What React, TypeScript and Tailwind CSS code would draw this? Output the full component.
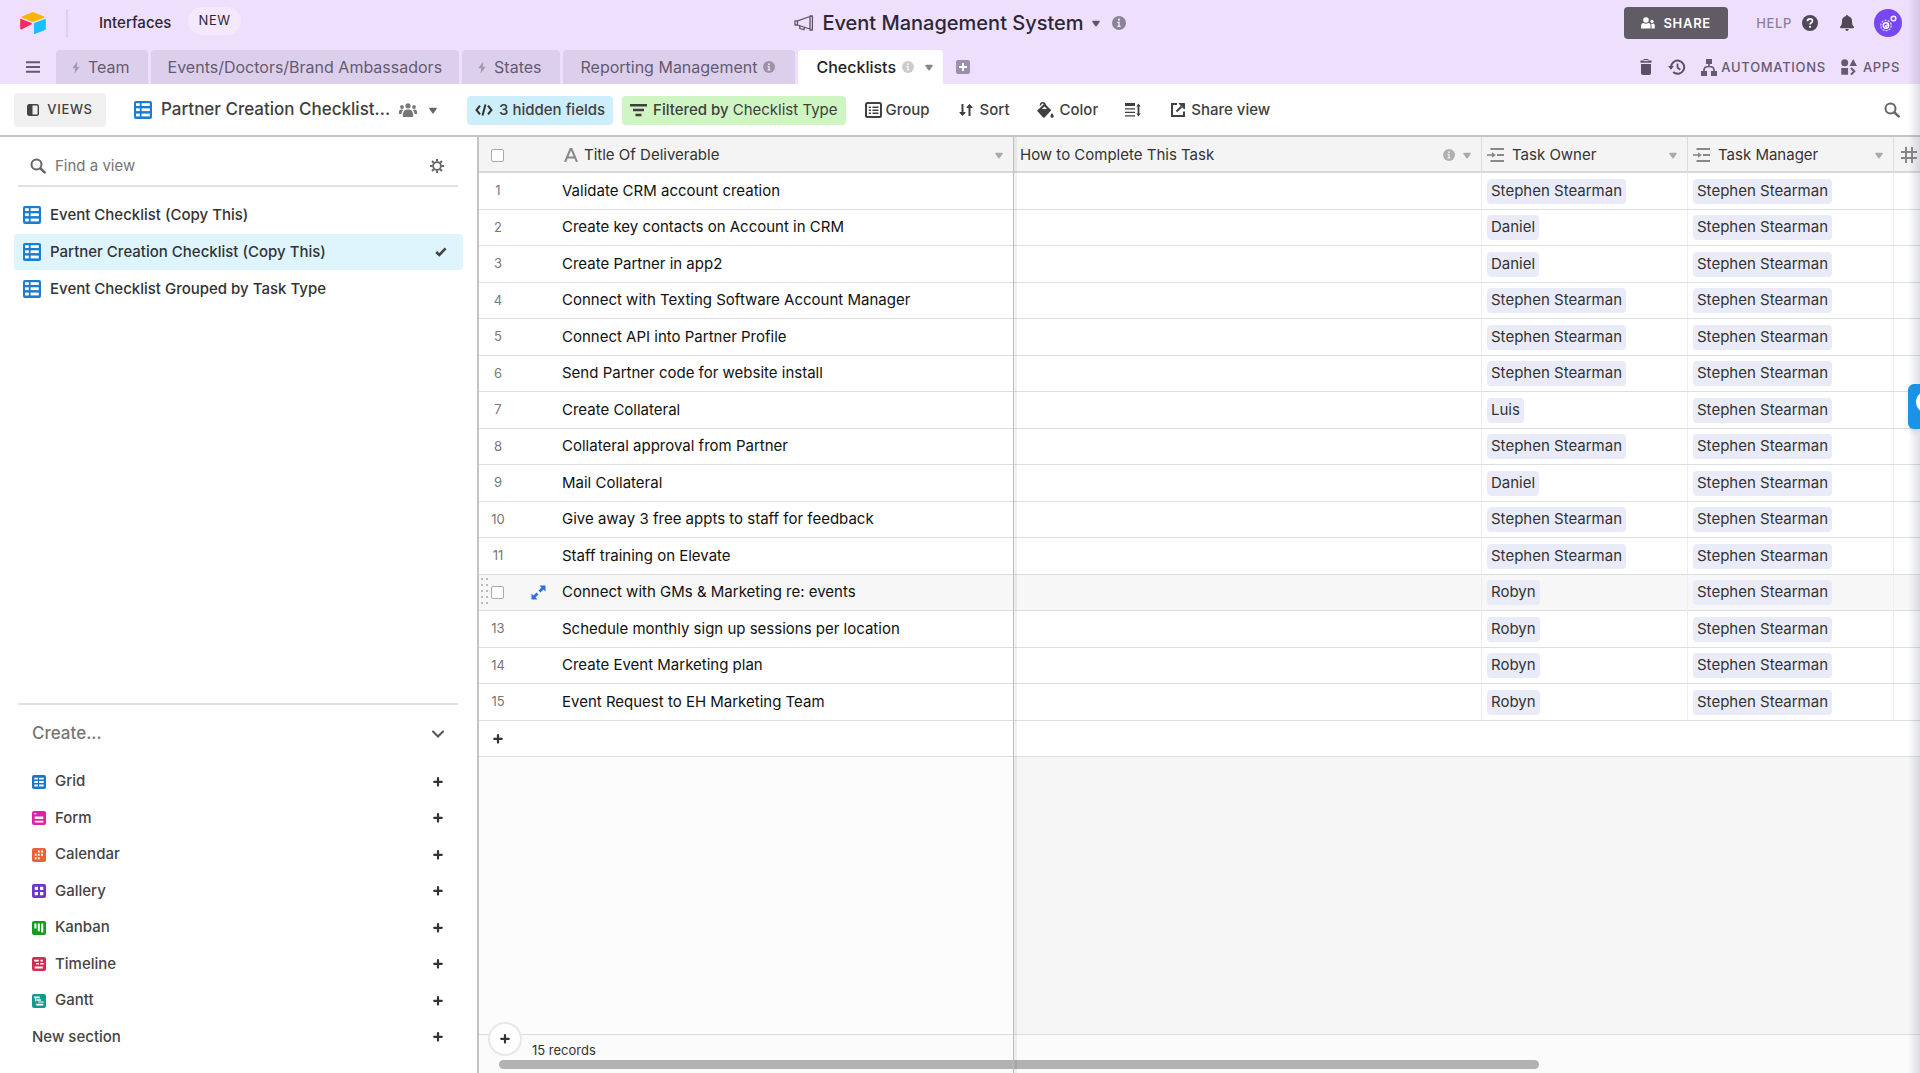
import type { ReactNode } from "react";
import clsx from "clsx";

type Task = { title: string; owner: string; manager: string };

const TASKS: Task[] = [
  { title: "Validate CRM account creation", owner: "Stephen Stearman", manager: "Stephen Stearman" },
  { title: "Create key contacts on Account in CRM", owner: "Daniel", manager: "Stephen Stearman" },
  { title: "Create Partner in app2", owner: "Daniel", manager: "Stephen Stearman" },
  { title: "Connect with Texting Software Account Manager", owner: "Stephen Stearman", manager: "Stephen Stearman" },
  { title: "Connect API into Partner Profile", owner: "Stephen Stearman", manager: "Stephen Stearman" },
  { title: "Send Partner code for website install", owner: "Stephen Stearman", manager: "Stephen Stearman" },
  { title: "Create Collateral", owner: "Luis", manager: "Stephen Stearman" },
  { title: "Collateral approval from Partner", owner: "Stephen Stearman", manager: "Stephen Stearman" },
  { title: "Mail Collateral", owner: "Daniel", manager: "Stephen Stearman" },
  { title: "Give away 3 free appts to staff for feedback", owner: "Stephen Stearman", manager: "Stephen Stearman" },
  { title: "Staff training on Elevate", owner: "Stephen Stearman", manager: "Stephen Stearman" },
  { title: "Connect with GMs & Marketing re: events", owner: "Robyn", manager: "Stephen Stearman" },
  { title: "Schedule monthly sign up sessions per location", owner: "Robyn", manager: "Stephen Stearman" },
  { title: "Create Event Marketing plan", owner: "Robyn", manager: "Stephen Stearman" },
  { title: "Event Request to EH Marketing Team", owner: "Robyn", manager: "Stephen Stearman" },
];

const HOVERED_ROW = 11;

const VIEWS = [
  "Event Checklist (Copy This)",
  "Partner Creation Checklist (Copy This)",
  "Event Checklist Grouped by Task Type",
];

/* ---------- icons ---------- */

function Caret({ className = "text-[#666]" }: { className?: string }) {
  return (
    <svg viewBox="0 0 8 7" className={clsx("h-[7px] w-2 shrink-0", className)} fill="currentColor">
      <path d="M1 .8h6c.6 0 .9.6.6 1.100L4.600 6.200c-.3.4-.9.400-1.200 0L.4 1.900C.1 1.400.4.8 1 .8z" />
    </svg>
  );
}

function Info({ className }: { className?: string }) {
  return (
    <svg viewBox="0 0 14 14" className={clsx("shrink-0", className)}>
      <circle cx="7" cy="7" r="7" fill="currentColor" />
      <circle cx="7" cy="3.700" r="1.100" fill="#fff" fillOpacity=".85" />
      <path d="M5.300 5.800h2.400v4h1v1.200H5.300V9.800h1V7h-1z" fill="#fff" fillOpacity=".85" />
    </svg>
  );
}

function Plus({ className = "size-3" }: { className?: string }) {
  return (
    <svg viewBox="0 0 12 12" className={clsx("shrink-0 text-[#333]", className)} stroke="currentColor" strokeWidth="2.200" strokeLinecap="round">
      <path d="M6 2v7.600M2.200 5.800h7.600" />
    </svg>
  );
}

function Bolt() {
  return (
    <svg viewBox="0 0 8 14" className="h-[13px] w-2 shrink-0 text-[#a398ae]" fill="currentColor">
      <path d="M5.600.5 0 7.800h3.200L2.400 13.500 8 6.200H4.800z" />
    </svg>
  );
}

function Search() {
  return (
    <svg viewBox="0 0 16 16" className="size-4 shrink-0 text-[#666]" fill="none" stroke="currentColor">
      <circle cx="6.500" cy="6.500" r="5" strokeWidth="2" />
      <path d="m10.400 10.400 4.200 4" strokeWidth="2.600" strokeLinecap="round" />
    </svg>
  );
}

function GridIcon() {
  return (
    <svg viewBox="0 0 18 18" className="size-[18px] shrink-0">
      <rect width="18" height="18" rx="2" fill="#1b7dd0" />
      <g fill="#fff">
        <rect x="2" y="2.200" width="3.800" height="2.800" />
        <rect x="7.600" y="2.200" width="8.200" height="2.800" />
        <rect x="2" y="7.300" width="3.800" height="2.800" />
        <rect x="7.600" y="7.300" width="8.200" height="2.800" />
        <rect x="2" y="12.600" width="3.800" height="2.800" />
        <rect x="7.600" y="12.600" width="8.200" height="2.800" />
      </g>
    </svg>
  );
}

function ViewTypeIcon({ color, children }: { color: string; children: ReactNode }) {
  return (
    <svg viewBox="0 0 14 14" className="size-[14px] shrink-0">
      <rect width="14" height="14" rx="2" fill={color} />
      <g fill="#fff">{children}</g>
    </svg>
  );
}

const VIEW_TYPES: { name: string; color: string; shape: ReactNode }[] = [
  {
    name: "Grid",
    color: "#1b76c8",
    shape: <path d="M2.300 2.700h3.600v1.900H2.300zM7 2.700h4.700v1.900H7zM2.300 6.100h3.600v1.900H2.300zM7 6.100h4.700v1.900H7zM2.300 9.500h3.600v1.900H2.300zM7 9.500h4.700v1.900H7z" />,
  },
  {
    name: "Form",
    color: "#dd22aa",
    shape: <path d="M2 2.200h2.500v1H2zM2.700 5.500h8.600v2.600H2.700zM2.700 9.700h8.600v1.800H2.700z" />,
  },
  {
    name: "Calendar",
    color: "#e8623a",
    shape: <path d="M5.900 2.500h1.800v2H5.900zM9 2.500h2v2H9zM2.800 5.800h1.800v2H2.800zM5.900 5.800h1.800v2H5.900zM9 5.800h2v2H9zM2.800 9.200h1.800v2H2.800zM5.900 9.200h1.800v2H5.900z" />,
  },
  {
    name: "Gallery",
    color: "#6b36c9",
    shape: <path d="M2.700 2.700h3.300v3.300H2.700zM8 2.700h3.300v3.300H8zM2.700 8h3.300v3.300H2.700zM8 8h3.300v3.300H8z" />,
  },
  {
    name: "Kanban",
    color: "#149c22",
    shape: <path d="M2.400 2.500h2v5h-2zM5.800 2.500h2v7.800h-2zM9.100 2.500h2.200v9H9.100z" />,
  },
  {
    name: "Timeline",
    color: "#d02d50",
    shape: <path d="M2.200 2.700h4.600v1.700H2.200zM8.500 2.700h2.300v1.700H8.500zM4.200 5.900h2.800v1.700H4.200zM8.200 5.900h3.600v1.700H8.200zM2.700 9.500h8.100v1.900H2.700z" />,
  },
  {
    name: "Gantt",
    color: "#14998f",
    shape: <path d="M2.200 2.500h5.600v1.700H2.200zM4.700 5.300h4.200v1.400H4.700zM6.200 7.400h5.500v1.200H6.200zM4.200 9.700h7.100v1.700H4.200zM3.200 4h1v3.500h-1z" />,
  },
];

function LinkFieldIcon() {
  return (
    <svg viewBox="0 0 18 16" className="h-4 w-[18px] shrink-0 text-[#888]" fill="none" stroke="currentColor" strokeWidth="2">
      <path d="M3.500 2H17M10 8h7M3.500 14H17" />
      <path d="M0 8h6" strokeWidth="1.600" />
      <path d="m5 5.200 3.800 2.800L5 10.800z" fill="currentColor" stroke="none" />
    </svg>
  );
}

/* ---------- top bars ---------- */

function TopBar() {
  return (
    <header className="grid h-[50px] grid-cols-[1fr_auto_1fr] pr-[18px] pl-5 text-[#2d2735]">
      <div className="flex h-[46px] items-center">
        <svg viewBox="0 0 26 22" className="h-[22px] w-[26px]">
          <path d="M11.700.5 2 4.500c-.6.200-.6 1 0 1.200l9.700 3.900c.9.300 1.800.3 2.600 0L24 5.700c.6-.2.600-1 0-1.200L14.300.5c-.8-.3-1.700-.3-2.600 0z" fill="#fcb400" />
          <path d="M14 11.800v9.500c0 .4.500.7.900.6l10.500-4.200c.3-.1.400-.3.400-.6V7.500c0-.4-.4-.7-.8-.6l-10.600 4.200c-.2.100-.4.400-.4.700z" fill="#18bfff" />
          <path d="m11.600 12.300-3.200 1.600-6.900 3.500c-.6.300-1.300-.1-1.300-.7V7.600C.2 7.100.8 6.600 1.400 6.900l10.100 4.200c.5.200.5.900.1 1.200z" fill="#f82b60" />
        </svg>
        <span className="ml-5 h-7 w-0.5 bg-[#dfd0ee]" />
        <button type="button" className="ml-[31px] text-[15px] font-medium">Interfaces</button>
        <span className="mb-1 ml-[17px] rounded-full bg-[#f3e8fe] px-2.5 py-1 text-[13px] tracking-wider">NEW</span>
      </div>

      <div className="flex h-[46px] items-center">
        <svg viewBox="0 0 20 16" className="h-4 w-5" fill="none" stroke="#5d5367" strokeWidth="1.300" strokeLinejoin="round">
          <path d="M3.500 5.800 16 1.500v12.500L3.500 10zM16 1h2.400v14H16zM1 5.800h2.500V10H1z" />
          <path d="M5.800 10.800v2.700l4.200 1.200.6-2.200" />
        </svg>
        <h1 className="ml-2 text-xl font-medium">Event Management System</h1>
        <span className="ml-2"><Caret className="text-[#5d5367]" /></span>
        <Info className="mr-0.5 ml-3 size-[14px] text-[#8d8398]" />
      </div>

      <div className="flex h-[46px] items-center justify-end text-sm">
        <button type="button" className="flex h-8 w-[104px] items-center justify-center gap-2 rounded bg-[#605b64] font-semibold tracking-wider text-white">
          <svg viewBox="0 0 14 12" className="h-3 w-[14px]" fill="#fff">
            <circle cx="5" cy="3" r="2.800" />
            <path d="M0 11.500V9c0-2 1.200-3 2.700-3 1.300.9 3.300.9 4.600 0C8.800 6 9.600 7 9.600 9v2.500z" />
            <circle cx="11" cy="4.400" r="1.600" />
            <path d="M10.500 11.500V9c0-1-.2-1.800-.6-2.400.8.500 1.600.4 2.300 0 1.200.1 1.600.9 1.600 2v2.900z" />
          </svg>
          <span className="text-[13px]">SHARE</span>
        </button>
        <a href="#help" className="ml-7 flex items-center gap-[10px] text-[13px] font-medium tracking-wider text-[#8a7f96]">
          HELP
          <svg viewBox="0 0 16 16" className="size-4">
            <circle cx="8" cy="8" r="8" fill="#504858" />
            <path d="M5.500 6.200c0-1.500 1.100-2.400 2.500-2.400s2.500.9 2.500 2.200C10.500 7.700 8 7.700 8 9.400" fill="none" stroke="#fff" strokeWidth="1.700" />
            <circle cx="8" cy="11.800" r="1.100" fill="#fff" />
          </svg>
        </a>
        <button type="button" aria-label="Notifications" className="ml-[22px]">
          <svg viewBox="0 0 14 16" className="h-4 w-[14px]" fill="#504858">
            <path d="M7 0c.7 0 1 .5 1 1 2.600.5 4 2.500 4 5 0 3.500.7 4.600 1.700 5.600.6.6.2 1.600-.7 1.600H1c-.9 0-1.300-1-.7-1.600C1.300 10.600 2 9.500 2 6c0-2.500 1.400-4.500 4-5 0-.5.3-1 1-1zM5.400 14h3.200c0 2.600-3.200 2.600-3.200 0z" />
          </svg>
        </button>
        <button type="button" aria-label="Account" className="ml-5 flex size-7 items-center justify-center rounded-full bg-[#7747f2]">
          <svg viewBox="0 0 28 28" className="size-7" fill="none" stroke="#fff">
            <circle cx="12" cy="16.500" r="2.700" strokeWidth="1.400" />
            <circle cx="12" cy="16.500" r="5.200" strokeWidth="1.300" strokeDasharray="2 1.200" strokeOpacity=".75" />
            <path d="m11 16.500 1 1 1.800-2.200" strokeWidth="1.200" />
            <circle cx="19.500" cy="9.500" r="2.300" strokeWidth="1.600" strokeOpacity=".9" />
          </svg>
        </button>
      </div>
    </header>
  );
}

function Tab({ children }: { children: ReactNode }) {
  return (
    <button type="button" className="flex h-[34px] items-center rounded-t-sm bg-[#dccfec] text-base text-[#655b70]">
      {children}
    </button>
  );
}

function TabBar() {
  return (
    <nav className="flex h-[34px] items-center pr-5 text-[#655b70]">
      <button type="button" aria-label="All tables" className="flex w-14 justify-center pl-2.5">
        <svg viewBox="0 0 14 12" className="h-3 w-[14px]" stroke="#655b70" strokeWidth="2">
          <path d="M0 1.200h14M0 6h14M0 10.800h14" />
        </svg>
      </button>
      <div className="flex gap-[3px]">
        <Tab><span className="flex items-center gap-2 pr-[18px] pl-4"><Bolt />Team</span></Tab>
        <Tab><span className="px-[17px]">Events/Doctors/Brand Ambassadors</span></Tab>
        <Tab><span className="flex items-center gap-2 pr-[18px] pl-4"><Bolt />States</span></Tab>
        <Tab>
          <span className="flex items-center gap-1.5 pr-5 pl-[18px]">
            Reporting Management
            <Info className="size-3 text-[#9d92a9]" />
          </span>
        </Tab>
        <button type="button" className="flex h-[34px] items-center rounded-t-sm bg-white pr-[10px] pl-[18px] text-base font-medium text-[#222]">
          Checklists
          <Info className="mr-[11px] ml-1.5 size-3 text-[#ccc]" />
          <Caret className="text-[#888]" />
        </button>
      </div>
      <button type="button" aria-label="Add table" className="ml-[13px]">
        <svg viewBox="0 0 14 14" className="size-[14px]">
          <rect width="14" height="14" rx="2" fill="#9c8fac" />
          <path d="M7 3v8M3 7h8" stroke="#fff" strokeWidth="1.800" />
        </svg>
      </button>

      <div className="ml-auto flex items-center text-sm font-medium">
        <button type="button" aria-label="Trash">
          <svg viewBox="0 0 12 16" className="h-4 w-3" fill="#5a5064">
            <path d="M4 0h4l1 1.500h2.500v2.200H.5V1.500H3zM1 5h10v9c0 1.200-.8 2-2 2H3c-1.200 0-2-.8-2-2z" />
            <path d="M3.500 1.700h5" stroke="#eedffc" />
          </svg>
        </button>
        <button type="button" aria-label="History" className="ml-4">
          <svg viewBox="0 0 18 16" className="h-4 w-[18px]" fill="none" stroke="#5a5064" strokeWidth="2">
            <path d="M3 8.500a6.600 6.600 0 1 1 2.200 4.600" />
            <path d="M9.500 4.500V8.500l2.700 2.200" strokeWidth="1.800" />
            <path d="M0 7h6L3 10.700z" fill="#5a5064" stroke="none" />
          </svg>
        </button>
        <button type="button" className="ml-[15px] flex items-center gap-1 tracking-wider">
          <svg viewBox="0 0 16 17" className="h-[17px] w-4" fill="#655b70">
            <path d="M5 0h6v5H5zM0 12h6v5H0zM10 12h6v5h-6z" />
            <path d="M8 5v3M3 12V11c0-2.500 2-3.500 5-3.500s5 1 5 3.500v1" fill="none" stroke="#655b70" strokeWidth="1.700" />
          </svg>
          <span className="text-[13px]">AUTOMATIONS</span>
        </button>
        <button type="button" className="ml-[15px] flex items-center gap-1.5 tracking-wider">
          <svg viewBox="0 0 16 16" className="size-4" fill="#655b70">
            <circle cx="3.700" cy="3.700" r="3.500" />
            <path d="M12.200 0 16 7H8.500zM.3 9h6.800v6.800H.3z" />
            <path d="m10 9 3.300 3.300L10 15.600" fill="none" stroke="#655b70" strokeWidth="2" />
          </svg>
          <span className="text-[13px]">APPS</span>
        </button>
      </div>
    </nav>
  );
}

function Toolbar() {
  return (
    <div className="flex h-[53px] items-center border-b-2 border-[#c4c4c4] bg-white pt-px pr-5 pl-[14px] text-[15px] font-medium text-[#404040]">
      <button type="button" className="flex h-[34px] w-[92px] items-center justify-center gap-2 rounded-sm bg-[#f0f0f0]">
        <svg viewBox="0 0 12 12" className="size-3">
          <rect x=".7" y=".7" width="10.600" height="10.600" rx="1.500" fill="none" stroke="#444" strokeWidth="1.400" />
          <path d="M1 1h4.500v10H1z" fill="#444" />
        </svg>
        <span className="text-[13px] tracking-wider">VIEWS</span>
      </button>
      <button type="button" className="ml-7 flex items-center">
        <GridIcon />
        <span className="ml-[9px] text-[17px]">Partner Creation Checklist...</span>
        <svg viewBox="0 0 18 14" className="ml-[9px] h-[14px] w-[18px]" fill="#777">
          <circle cx="9" cy="2.800" r="2.600" />
          <circle cx="3" cy="4" r="1.900" />
          <circle cx="15" cy="4" r="1.900" />
          <path d="M4.800 14c-.8 0-1-.6-1-1.500C3.800 8.500 5.500 6.500 9 6.500s5.200 2 5.200 6c0 .9-.2 1.500-1 1.500zM0 11V9c0-1.700 1-2.500 2.500-2.500.8 0 1.300.2 1.700.5C3 8.200 2.600 9.500 2.500 11zM18 11V9c0-1.700-1-2.500-2.500-2.500-.8 0-1.300.2-1.700.5 1.200 1.200 1.600 2.500 1.700 4z" />
        </svg>
        <span className="ml-3"><Caret /></span>
      </button>
      <button type="button" className="ml-[30px] flex h-[29px] items-center gap-1.5 rounded-sm bg-[#cdeefb] px-2">
        <svg viewBox="0 0 18 12" className="h-3 w-[18px]" fill="none" stroke="#333" strokeWidth="2">
          <path d="M5 1.700 1.500 6 5 10.300M13 1.700 16.500 6 13 10.300M10.500.5l-3 11" />
        </svg>
        3 hidden fields
      </button>
      <button type="button" className="ml-[9px] flex h-[29px] items-center gap-1.5 rounded-sm bg-[#cff5c2] px-2">
        <svg viewBox="0 0 17 13" className="h-[13px] w-[17px]" stroke="#404040" strokeWidth="2.400">
          <path d="M0 1.300h17M3 6h11M5.500 11h6" />
        </svg>
        <span>Filtered by <span className="font-normal">Checklist Type</span></span>
      </button>
      <button type="button" className="ml-[19px] flex items-center gap-1">
        <svg viewBox="0 0 17 16" className="h-4 w-[17px]" fill="none" stroke="#404040" strokeWidth="2">
          <rect x="1" y="1" width="15" height="14" rx="1.500" />
          <path d="M3.800 5.300h2.200M3.800 8.300h2.200M3.800 11.300h2.200M7.500 5.300h6M7.500 8.300h6M7.500 11.300h6" strokeWidth="1.600" />
        </svg>
        Group
      </button>
      <button type="button" className="ml-7 flex items-center gap-1.5">
        <svg viewBox="0 0 16 14" className="h-[14px] w-4" fill="none" stroke="#404040" strokeWidth="2">
          <path d="M4.500 1v10M11.500 13V3" />
          <path d="M1.800 9.500 4.500 12.500 7.200 9.500zM8.800 4.500 11.500 1.500 14.200 4.500z" fill="#404040" strokeWidth="1" />
        </svg>
        Sort
      </button>
      <button type="button" className="ml-[27px] flex items-center gap-1.5">
        <svg viewBox="0 0 17 16" className="h-4 w-[17px]" fill="#404040">
          <path d="M0 8.700 7.500 1.500l6.800 6.700-6.500 7c-.6.600-1.300.6-1.900 0zM15 11c1.200 1.600 1.700 2.400 1.700 3.200 0 1-.8 1.500-1.600 1.500s-1.600-.5-1.600-1.500c0-.8.4-1.600 1.500-3.200z" />
          <path d="M3.300 3.500C3.600.5 6-.3 8 2l1 4.500" fill="none" stroke="#404040" strokeWidth="1.500" />
          <path d="M4.800 7 7.500 4.500l2.500 2.500z" fill="#fff" />
        </svg>
        Color
      </button>
      <button type="button" aria-label="Row height" className="ml-[27px]">
        <svg viewBox="0 0 16 14" className="h-[14px] w-4" fill="none" stroke="#404040">
          <path d="M0 1.500h10" strokeWidth="3" />
          <path d="M0 5.800h10M0 9.300h10M0 12.800h10" strokeWidth="1.300" />
          <path d="M13.500 2.500v9" strokeWidth="1.800" />
          <path d="m11.300 3.500 2.200-3 2.200 3zM11.300 10.500l2.200 3 2.200-3z" fill="#404040" stroke="none" />
        </svg>
      </button>
      <button type="button" className="ml-[30px] flex items-center gap-1.5">
        <svg viewBox="0 0 14 14" className="size-[14px]" fill="none" stroke="#404040" strokeWidth="2">
          <path d="M6 1H1v12h12V8.500" />
          <path d="m5.500 8.500 5-5" />
          <path d="M8 .5h5.500V6z" fill="#404040" strokeWidth="1" />
        </svg>
        Share view
      </button>
      <button type="button" aria-label="Search" className="ml-auto"><Search /></button>
    </div>
  );
}

/* ---------- sidebar ---------- */

function Sidebar() {
  return (
    <aside className="flex w-[479px] shrink-0 flex-col justify-between border-r-2 border-[#c4c4c4] bg-white text-[15px] font-medium">
      <div>
        <div className="mr-[19px] ml-[18px] flex h-[50px] items-center border-b-2 border-[#e0e0e0] pt-2.5 pr-[14px] pl-3">
          <Search />
          <input
            type="text"
            aria-label="Find a view"
            placeholder="Find a view"
            className="ml-[9px] flex-1 font-normal outline-none placeholder:text-[#757575]"
          />
          <button type="button" aria-label="View settings">
            <svg viewBox="0 0 14 14" className="size-[14px]" fill="none" stroke="#666">
              <circle cx="7" cy="7" r="3.900" strokeWidth="1.800" />
              <path d="M7 0v2.500M7 11.500V14M0 7h2.500M11.500 7H14M2 2l1.800 1.800M10.200 10.200 12 12M2 12l1.800-1.800M10.200 3.800 12 2" strokeWidth="2" />
            </svg>
          </button>
        </div>
        <ul className="mt-2.5 mr-[14px] ml-[14px] text-[#333]">
          {VIEWS.map((v, i) => (
            <li key={v} className="h-[37px]">
              <button
                type="button"
                className={clsx(
                  "flex h-9 w-full items-center gap-[9px] rounded-sm pr-4 pl-[9px]",
                  i === 1 && "bg-[#def5fd]",
                )}
              >
                <GridIcon />
                {v}
                {i === 1 && (
                  <svg viewBox="0 0 12 10" className="ml-auto h-[10px] w-3" fill="none" stroke="#444" strokeWidth="2.600">
                    <path d="m1.200 5 3.100 3 6.300-6.700" />
                  </svg>
                )}
              </button>
            </li>
          ))}
        </ul>
      </div>

      <div className="mr-[19px] ml-[18px] border-t-2 border-[#e0e0e0] pr-[14px] pb-[18px] pl-[14px] text-[#444]">
        <button type="button" className="mb-px flex h-[57px] w-full items-center justify-between text-[17px] text-[#777]">
          Create...
          <svg viewBox="0 0 12 8" className="h-2 w-3" fill="none" stroke="#555" strokeWidth="2" strokeLinecap="round">
            <path d="m1 1.500 5 5 5-5" />
          </svg>
        </button>
        <ul>
          {VIEW_TYPES.map((t) => (
            <li key={t.name} className="h-9 odd:h-[37px]">
              <button type="button" className="flex h-full w-full items-center gap-[9px]">
                <ViewTypeIcon color={t.color}>{t.shape}</ViewTypeIcon>
                {t.name}
                <Plus className="ml-auto size-3" />
              </button>
            </li>
          ))}
          <li className="h-9">
            <button type="button" className="flex h-full w-full items-center justify-between">
              New section
              <Plus />
            </button>
          </li>
        </ul>
      </div>
    </aside>
  );
}

/* ---------- grid ---------- */

function Chip({ children }: { children: ReactNode }) {
  return <span className="inline-block h-[25px] rounded-sm bg-[#e9ecf8] px-1 leading-6 text-[#333]">{children}</span>;
}

function CheckBox({ label }: { label: string }) {
  return (
    <input
      type="checkbox"
      aria-label={label}
      className="block size-[13px] appearance-none rounded-xs border border-[#aaa] bg-white"
    />
  );
}

function TaskTable() {
  const th = "border-b-2 border-[#d8d8d8] bg-[#f4f4f4] p-0 pt-0.5 font-normal";
  const td = "border-b border-[#dcdfe0] p-0";
  return (
    <table className="w-full table-fixed border-separate border-spacing-0 text-left text-[15px] text-[#222]">
      <colgroup>
        <col className="w-[77px]" />
        <col className="w-[457px]" />
        <col className="w-[469px]" />
        <col className="w-[206px]" />
        <col className="w-[206px]" />
        <col />
      </colgroup>
      <thead>
        <tr className="h-[36px] text-[#333]">
          <th className={th}><div className="pl-3"><CheckBox label="Select all" /></div></th>
          <th className={th}>
            <div className="flex items-center pr-2.5 pl-2">
              <svg viewBox="0 0 14 14" className="h-[14px] w-[14px]" fill="none" stroke="#888" strokeWidth="2">
                <path d="M1 14 6.500 1h1L13 14M3 9.500h8" />
              </svg>
              <span className="ml-1.5 flex-1">Title Of Deliverable</span>
              <Caret className="text-[#aaa]" />
            </div>
          </th>
          <th className={clsx(th, "border-r border-r-[#ddd]")}>
            <div className="flex items-center pr-2.5 pl-[7px]">
              <span className="flex-1">How to Complete This Task</span>
              <Info className="mr-2 size-3 text-[#b0b0b0]" />
              <Caret className="text-[#aaa]" />
            </div>
          </th>
          {["Task Owner", "Task Manager"].map((name) => (
            <th key={name} className={clsx(th, "border-r border-r-[#ddd]")}>
              <div className="flex items-center pr-2.5 pl-[5px]">
                <LinkFieldIcon />
                <span className="ml-[7px] flex-1">{name}</span>
                <Caret className="text-[#aaa]" />
              </div>
            </th>
          ))}
          <th className={th} aria-label="Number">
            <svg viewBox="0 0 16 16" className="ml-[7px] size-4" fill="none" stroke="#888" strokeWidth="2">
              <path d="M5 0v16M11 0v16M0 5h16M0 11h16" />
            </svg>
          </th>
        </tr>
      </thead>
      <tbody>
        {TASKS.map((t, i) => {
          const hovered = i === HOVERED_ROW;
          return (
            <tr key={t.title} className={clsx("h-9 odd:h-[37px]", hovered ? "bg-[#f7f7f7]" : "bg-white")}>
              <td className={td}>
                {hovered ? (
                  <div className="flex items-center pl-0.5">
                    <svg viewBox="0 0 7 32" className="h-8 w-[7px]" stroke="#bbb" strokeWidth="2" strokeDasharray="2 4">
                      <path d="M1 1v30M6 1v30" />
                    </svg>
                    <span className="ml-[3px]"><CheckBox label={`Select ${t.title}`} /></span>
                    <button type="button" aria-label="Expand record" className="ml-[27px]">
                      <svg viewBox="0 0 15 15" className="size-[15px]" fill="#2d6fe0">
                        <path d="M8.500.5h6v6zM.5 8.500v6h6z" />
                        <path d="M12 3 8.500 6.500M3 12l3.500-3.500" stroke="#2d6fe0" strokeWidth="2.800" />
                      </svg>
                    </button>
                  </div>
                ) : (
                  <div className="w-[38px] text-center text-[13px] text-[#777]">{i + 1}</div>
                )}
              </td>
              <td className={clsx(td, "pl-1.5 text-[#111]")}>{t.title}</td>
              <td className={clsx(td, "border-r border-r-[#eceef0]")} />
              <td className={clsx(td, "border-r border-r-[#eceef0]")}>
                <div className="flex pl-[5px]"><Chip>{t.owner}</Chip></div>
              </td>
              <td className={clsx(td, "border-r border-r-[#eceef0]")}>
                <div className="flex pl-[5px]"><Chip>{t.manager}</Chip></div>
              </td>
              <td className={td} />
            </tr>
          );
        })}
        <tr className="h-9 bg-white">
          <td className={td} colSpan={6}>
            <button type="button" aria-label="Add record" className="flex w-[38px] justify-center"><Plus /></button>
          </td>
        </tr>
      </tbody>
    </table>
  );
}

function GridView() {
  return (
    <main className="relative flex min-w-0 flex-1 flex-col overflow-hidden">
      <TaskTable />
      <div className="flex flex-1">
        <div className="w-[534px] bg-[#fcfcfc]" />
        <div className="flex-1 bg-[#f6f6f6]" />
      </div>
      <footer className="relative flex h-[39px] flex-col justify-between border-t border-[#ddd] bg-[#fbfbfb] pb-1">
        <p className="mt-[5px] ml-[53px] text-[13px] leading-5 text-[#333]">15 records</p>
        <div className="ml-5 h-[9px] w-[1040px] rounded-full bg-[#b2b2b2]" />
        <button
          type="button"
          aria-label="Add record"
          className="absolute -top-[13px] left-[9px] flex size-[34px] items-center justify-center rounded-full border-2 border-[#e8e8e8] bg-white"
        >
          <Plus />
        </button>
      </footer>
      {/* frozen column divider */}
      <div className="pointer-events-none absolute inset-y-0 left-[534px] w-1 border-l border-[#bdbdbd] bg-black/5" />
    </main>
  );
}

export default function App() {
  return (
    <div className="relative flex h-screen flex-col overflow-hidden bg-[#eedffc] font-['Inter',sans-serif]">
      <TopBar />
      <TabBar />
      <Toolbar />
      <div className="flex min-h-0 flex-1">
        <Sidebar />
        <GridView />
      </div>
      {/* docked panel peeking in from the right edge */}
      <div className="pointer-events-none absolute inset-y-0 right-0 w-3 bg-linear-to-r from-transparent to-[#5a6478]/20" />
      <button
        type="button"
        aria-label="Open panel"
        className="absolute top-[384px] right-0 h-[45px] w-3 overflow-hidden rounded-l-md bg-[#1a93e6] shadow-md"
      >
        <svg viewBox="0 0 12 45" className="h-[45px] w-3">
          <circle cx="19" cy="18" r="11" fill="#fff" />
        </svg>
      </button>
    </div>
  );
}
